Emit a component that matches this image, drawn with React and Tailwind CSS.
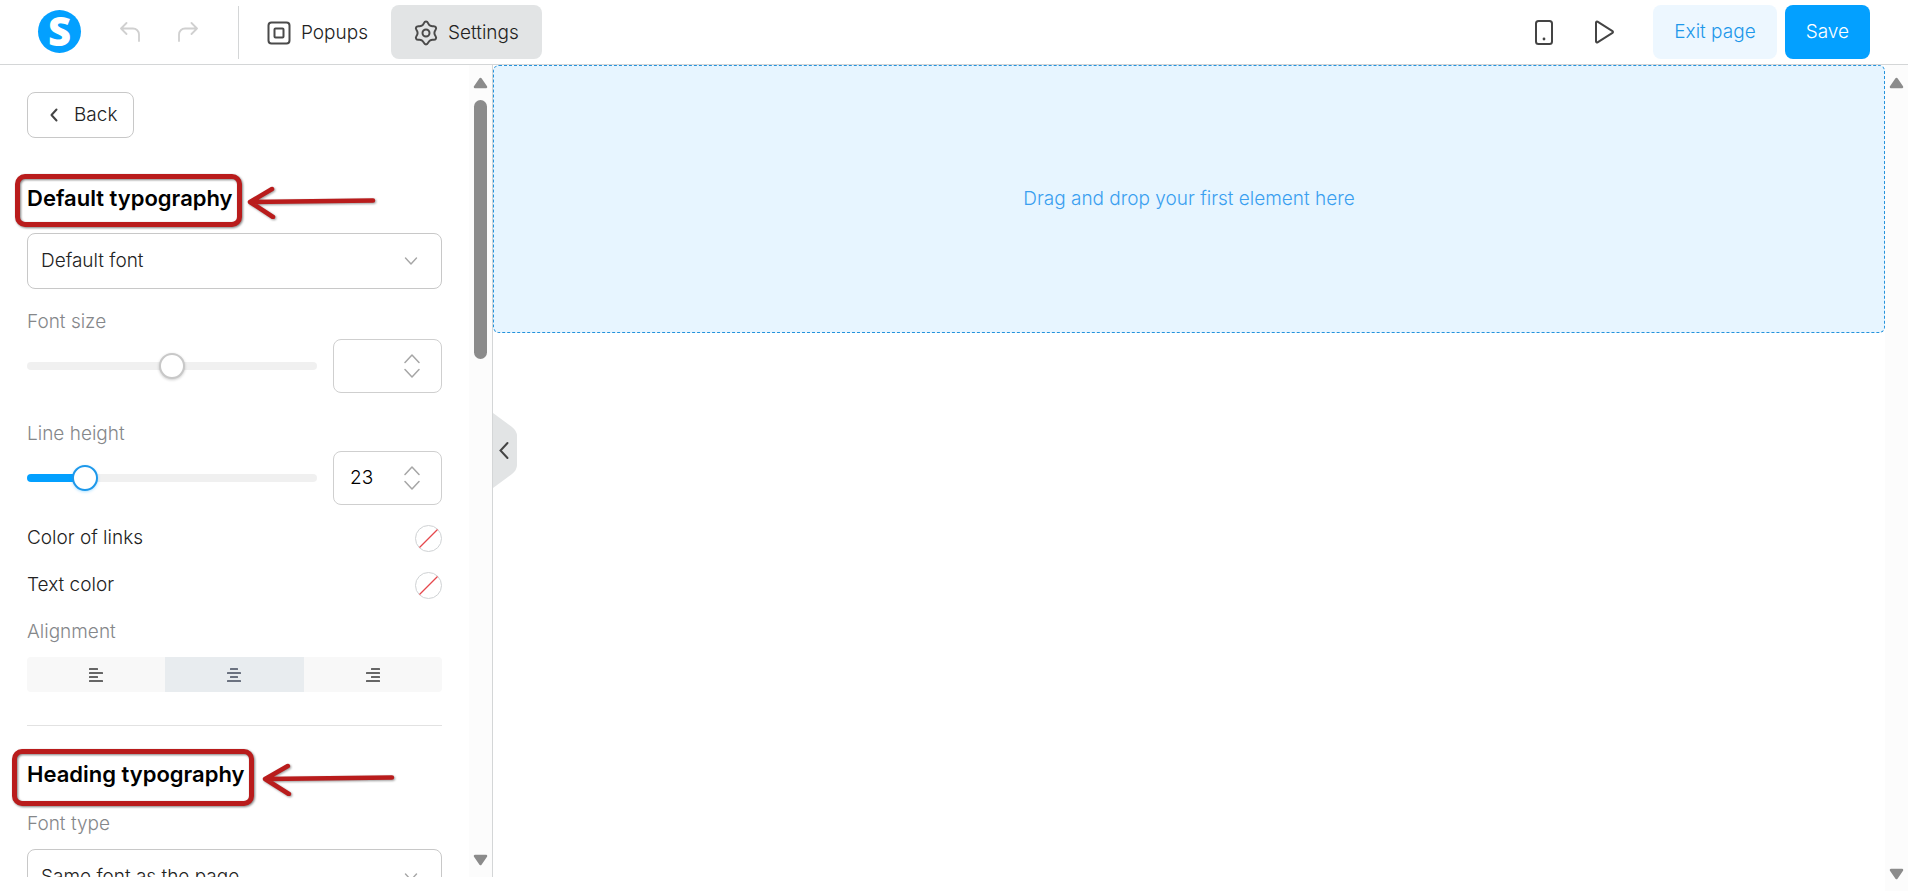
import React, { useState } from 'react';

const ICON = {
  fill: 'none',
  stroke: 'currentColor',
  strokeLinecap: 'round',
  strokeLinejoin: 'round',
};

const Logo = () => (
  <svg width="43" height="43" viewBox="0 0 43 43" className="mb-0.5 overflow-visible" role="img" aria-label="Logo">
    <circle cx="21.5" cy="21.5" r="21.5" fill="#03a0ff" />
    <text
      x="21.5"
      y="35.5"
      textAnchor="middle"
      fill="#ffffff"
      fontSize="40"
      fontWeight="800"
      fontFamily="'Open Sans', sans-serif"
    >
      S
    </text>
  </svg>
);

const UndoIcon = ({ flipped }) => (
  <svg width="20" height="20" viewBox="0 0 20 20" strokeWidth="1.8" className={flipped ? '-scale-x-100' : ''} {...ICON}>
    <path d="M6.5 1 1 6.5 6.5 12M1 6.5h12a6 6 0 0 1 6 6V19" />
  </svg>
);

const PopupIcon = () => (
  <svg width="24" height="24" viewBox="0 0 24 24" strokeWidth="2" className="text-[#4a4a4a]" {...ICON}>
    <rect x="1.5" y="1.5" width="21" height="21" rx="3" />
    <rect x="7.5" y="7.5" width="9" height="9" rx="1" />
  </svg>
);

// point at radius r and angle deg, moved by t along the tangent
const polar = (r, deg, t = 0) => {
  const a = (deg * Math.PI) / 180;
  const x = 12 + r * Math.cos(a) - t * Math.sin(a);
  const y = 12 + r * Math.sin(a) + t * Math.cos(a);
  return `${x.toFixed(2)} ${y.toFixed(2)}`;
};

const GEAR_PATH = `M${polar(8.4, -120)}${[-90, -30, 30, 90, 150, 210]
  .map(
    (deg) =>
      `C${polar(8.4, deg - 30, 3)} ${polar(11.4, deg, -2.6)} ${polar(11.4, deg)}` +
      `C${polar(11.4, deg, 2.6)} ${polar(8.4, deg + 30, -3)} ${polar(8.4, deg + 30)}`
  )
  .join('')}Z`;

const GearIcon = () => (
  <svg width="24" height="24" viewBox="0 0 24 24" strokeWidth="2" className="overflow-visible text-[#4a4a4a]" {...ICON}>
    <path d={GEAR_PATH} />
    <circle cx="12" cy="12" r="3.5" />
  </svg>
);

const PhoneIcon = () => (
  <svg width="26" height="26" viewBox="0 0 26 26" strokeWidth="2" {...ICON}>
    <rect x="5" y="2" width="16" height="23" rx="2.5" />
    <circle cx="13" cy="20" r="1.4" fill="currentColor" stroke="none" />
  </svg>
);

const PlayIcon = () => (
  <svg width="26" height="26" viewBox="0 0 26 26" strokeWidth="2" {...ICON}>
    <path d="M5 3.5v19a1 1 0 0 0 1.5.8l15-9.4a1 1 0 0 0 0-1.7l-15-9.5A1 1 0 0 0 5 3.5z" />
  </svg>
);

const ChevronDown = () => (
  <svg width="14" height="8" viewBox="0 0 14 8" strokeWidth="1.4" {...ICON}>
    <path d="m1.5 1 5.5 6 5.5-6" />
  </svg>
);

const ALIGN_BARS = {
  left: [[0, 9], [0, 14], [0, 9], [0, 14]],
  center: [[3, 8], [0, 14], [3, 8], [0, 14]],
  right: [[5, 9], [0, 14], [5, 9], [0, 14]],
};

const AlignIcon = ({ type }) => (
  <svg width="14" height="14" viewBox="0 0 14 14" fill="currentColor">
    {ALIGN_BARS[type].map(([x, w], i) => (
      <rect key={i} x={x} y={i * 4} width={w} height="2" rx="0.5" />
    ))}
  </svg>
);

const ScrollArrow = ({ down }) => (
  <svg width="15" height="12" viewBox="0 0 15 12" className={down ? 'rotate-180' : ''}>
    <path d="M7.5 2 13 10H2z" fill="#8b8b8b" stroke="#8b8b8b" strokeWidth="2.5" strokeLinejoin="round" />
  </svg>
);

// red box and arrow that point out a section title
const Callout = ({ children, boxClass, arrowClass }) => (
  <div className="relative flex">
    <h2 className="text-[22px] leading-7 font-semibold text-black">{children}</h2>
    <div className={`absolute rounded-[10px] border-[5px] border-[#b91c1c] drop-shadow-[1px_1px_1px_rgba(0,0,0,0.5)] ${boxClass}`} />
    <svg
      viewBox="0 0 130 34"
      preserveAspectRatio="none"
      className={`absolute h-[34px] text-[#b91c1c] drop-shadow-[1px_1px_1px_rgba(0,0,0,0.4)] ${arrowClass}`}
      strokeWidth="4.5"
      {...ICON}
    >
      <path d="M127 15.5 4 17M26 4 4 17l23 15" />
    </svg>
  </div>
);

const SelectField = ({ id, label, options }) => (
  <div className="relative">
    <select
      id={id}
      aria-label={label}
      className="h-14 w-full appearance-none rounded-lg border border-[#c8c8c8] bg-white pr-12 pl-[13px] text-[#222222]"
    >
      {options.map((o) => (
        <option key={o}>{o}</option>
      ))}
    </select>
    <span className="pointer-events-none absolute inset-y-0 right-6 flex items-center text-[#a6a6a6]">
      <ChevronDown />
    </span>
  </div>
);

const SliderField = ({ id, label, start, number, muted, className }) => {
  const [value, setValue] = useState(start);
  const fill = muted ? '#f0f0f0' : '#03a0ff';

  return (
    <div className={className}>
      <label htmlFor={id} className="block leading-6 text-[#85878a]">{label}</label>
      <div className="mt-[5px] flex items-center gap-4">
        <input
          id={id}
          type="range"
          min="0"
          max="100"
          value={value}
          onChange={(e) => setValue(Number(e.target.value))}
          style={{ background: `linear-gradient(to right, ${fill} ${value}%, #f0f0f0 ${value}%)` }}
          className={`h-2 min-w-0 flex-1 appearance-none rounded-full [&::-webkit-slider-thumb]:size-[26px] [&::-webkit-slider-thumb]:appearance-none [&::-webkit-slider-thumb]:rounded-full [&::-webkit-slider-thumb]:border-2 [&::-webkit-slider-thumb]:bg-white ${
            muted
              ? '[&::-webkit-slider-thumb]:border-[#c8c8c8] [&::-webkit-slider-thumb]:shadow-[0_1px_3px_rgba(0,0,0,0.2)]'
              : '[&::-webkit-slider-thumb]:border-[#1d98ea] [&::-webkit-slider-thumb]:shadow-[0_1px_3px_rgba(3,160,255,0.3)]'
          }`}
        />
        <div className="flex h-[54px] w-[109px] items-center justify-between rounded-lg border border-[#cfcfcf] pr-[21px] pl-4">
          <input
            type="text"
            aria-label={`${label} value`}
            defaultValue={number}
            className="w-10 bg-transparent text-black outline-none"
          />
          <button type="button" aria-label={`Change ${label}`} className="text-[#a6a6a6]">
            <svg width="16" height="24" viewBox="0 0 16 24" strokeWidth="1.5" {...ICON}>
              <path d="m1 8.5 7-7.5 7 7.500M1 15.5 8 23l7-7.5" />
            </svg>
          </button>
        </div>
      </div>
    </div>
  );
};

const ColorRow = ({ label }) => (
  <div className="mt-5 flex h-[27px] items-center justify-between text-[#222222]">
    <span>{label}</span>
    <button type="button" aria-label={label} className="size-[27px] rounded-full border border-[#cfd2d4]">
      <svg width="25" height="25" viewBox="0 0 25 25">
        <path d="M3.5 21.5 21.5 3.5" stroke="#e5484d" strokeWidth="1.3" />
      </svg>
    </button>
  </div>
);

const Header = () => (
  <header className="flex h-[65px] shrink-0 items-center justify-between border-b border-[#d4d6d7] px-[38px]">
    <div className="flex items-center">
      <Logo />
      <button type="button" aria-label="Undo" className="ml-[39px] text-[#d0d0d0]">
        <UndoIcon />
      </button>
      <button type="button" aria-label="Redo" className="ml-[38px] text-[#d0d0d0]">
        <UndoIcon flipped />
      </button>
      <div className="ml-10 h-[53px] w-px bg-[#d4d6d7]" />
      <nav className="flex items-center gap-1 text-[#222222]">
        <button type="button" className="flex h-[54px] items-center gap-2.5 pt-0.5 pr-[19px] pl-7">
          <PopupIcon />
          Popups
        </button>
        <button type="button" className="flex h-[54px] items-center gap-2.5 rounded-lg bg-[#e2e4e5] px-[23px] pt-0.5">
          <GearIcon />
          Settings
        </button>
      </nav>
    </div>
    <div className="flex items-center">
      <button type="button" aria-label="Mobile view" className="text-[#444444]">
        <PhoneIcon />
      </button>
      <button type="button" aria-label="Preview" className="ml-[34px] text-[#444444]">
        <PlayIcon />
      </button>
      <a href="#exit" className="ml-9 flex h-[54px] items-center rounded-lg bg-[#edf7ff] px-[21px] text-[#1d98ea]">
        Exit page
      </a>
      <button type="button" className="ml-2 h-[54px] rounded-lg bg-[#03a0ff] px-[21px] text-white">
        Save
      </button>
    </div>
  </header>
);

const Sidebar = () => {
  const [align, setAlign] = useState('center');

  return (
    <aside className="relative mb-3.5 flex w-[493px] shrink-0 border-r border-[#d4d6d7]">
      <div className="min-w-0 flex-1 overflow-hidden px-[27px] pt-[27px]">
        <button type="button" className="flex h-[46px] items-center gap-4 rounded-lg border border-[#c8c8c8] pr-4 pl-[22px] text-[#222222]">
          <svg width="8" height="14" viewBox="0 0 8 14" strokeWidth="2" className="text-[#444444]" {...ICON}>
            <path d="M6.5 1.5 1.5 7l5 5.5" />
          </svg>
          Back
        </button>

        <div className="mt-[46px]">
          <Callout
            boxClass="-left-3 -top-2.5 h-[53px] w-[227px]"
            arrowClass="left-[219px] top-px w-[130px]"
          >
            Default typography
          </Callout>
        </div>
        <div className="mt-[21px]">
          <SelectField id="default-font" label="Default font" options={['Default font']} />
        </div>

        <SliderField id="font-size" label="Font size" start={50} number="" muted className="mt-[21px]" />
        <SliderField id="line-height" label="Line height" start={17} number="23" className="mt-[29px]" />

        <ColorRow label="Color of links" />
        <ColorRow label="Text color" />

        <p className="mt-[21px] leading-6 text-[#85878a]">Alignment</p>
        <div className="mt-[13px] grid grid-cols-3 overflow-hidden rounded-sm">
          {['left', 'center', 'right'].map((type) => (
            <button
              key={type}
              type="button"
              aria-label={`Align ${type}`}
              onClick={() => setAlign(type)}
              className={`flex h-[35px] items-center justify-center ${
                align === type ? 'bg-[#e8ecef] text-[#6b7280]' : 'bg-[#f8f8f8] text-[#666666]'
              }`}
            >
              <AlignIcon type={type} />
            </button>
          ))}
        </div>

        <hr className="mt-[33px] border-[#e2e2e2]" />

        <div className="mt-[34px]">
          <Callout
            boxClass="-left-[15px] -top-[11px] h-[57px] w-[242px]"
            arrowClass="left-[234px] top-0.5 w-[134px]"
          >
            Heading typography
          </Callout>
        </div>
        <label htmlFor="heading-font" className="mt-6 block leading-6 text-[#85878a]">Font type</label>
        <div className="mt-[13px]">
          <SelectField id="heading-font" label="Font type" options={['Same font as the page']} />
        </div>
      </div>

      <div className="flex w-[23px] shrink-0 flex-col items-center bg-[#fcfcfc] pt-3 pb-[11px]">
        <ScrollArrow />
        <div className="mt-[11px] h-[259px] w-[13px] rounded-full bg-[#8b8b8b]" />
        <div className="flex-1" />
        <ScrollArrow down />
      </div>

      <button type="button" aria-label="Collapse panel" className="absolute top-[348px] left-full ml-px h-[75px] w-6 text-[#444444]">
        <svg width="24" height="75" viewBox="0 0 24 75">
          <path d="M0 0 19 14Q24 18 24 23V52Q24 57 19 61L0 75z" fill="#e2e4e5" />
          <path d="M14.5 30 7.5 37.5l7 7.5" fill="none" stroke="currentColor" strokeWidth="2" strokeLinecap="round" />
        </svg>
      </button>
    </aside>
  );
};

const App = () => {
  return (
    <div className="flex h-screen flex-col overflow-hidden bg-white font-['Inter',sans-serif] text-[19px] font-light">
      <Header />
      <div className="flex min-h-0 flex-1">
        <Sidebar />
        <main className="min-w-0 flex-1">
          <div className="flex h-[268px] items-center justify-center rounded-md border border-dashed border-[#2593dc] bg-[#e7f5ff] text-[#3a9ff0]">
            Drag and drop your first element here
          </div>
        </main>
        <div className="flex w-[23px] shrink-0 flex-col items-center justify-between bg-[#fcfcfc] pt-3 pb-[11px]">
          <ScrollArrow />
          <ScrollArrow down />
        </div>
      </div>
    </div>
  );
};

export default App;
